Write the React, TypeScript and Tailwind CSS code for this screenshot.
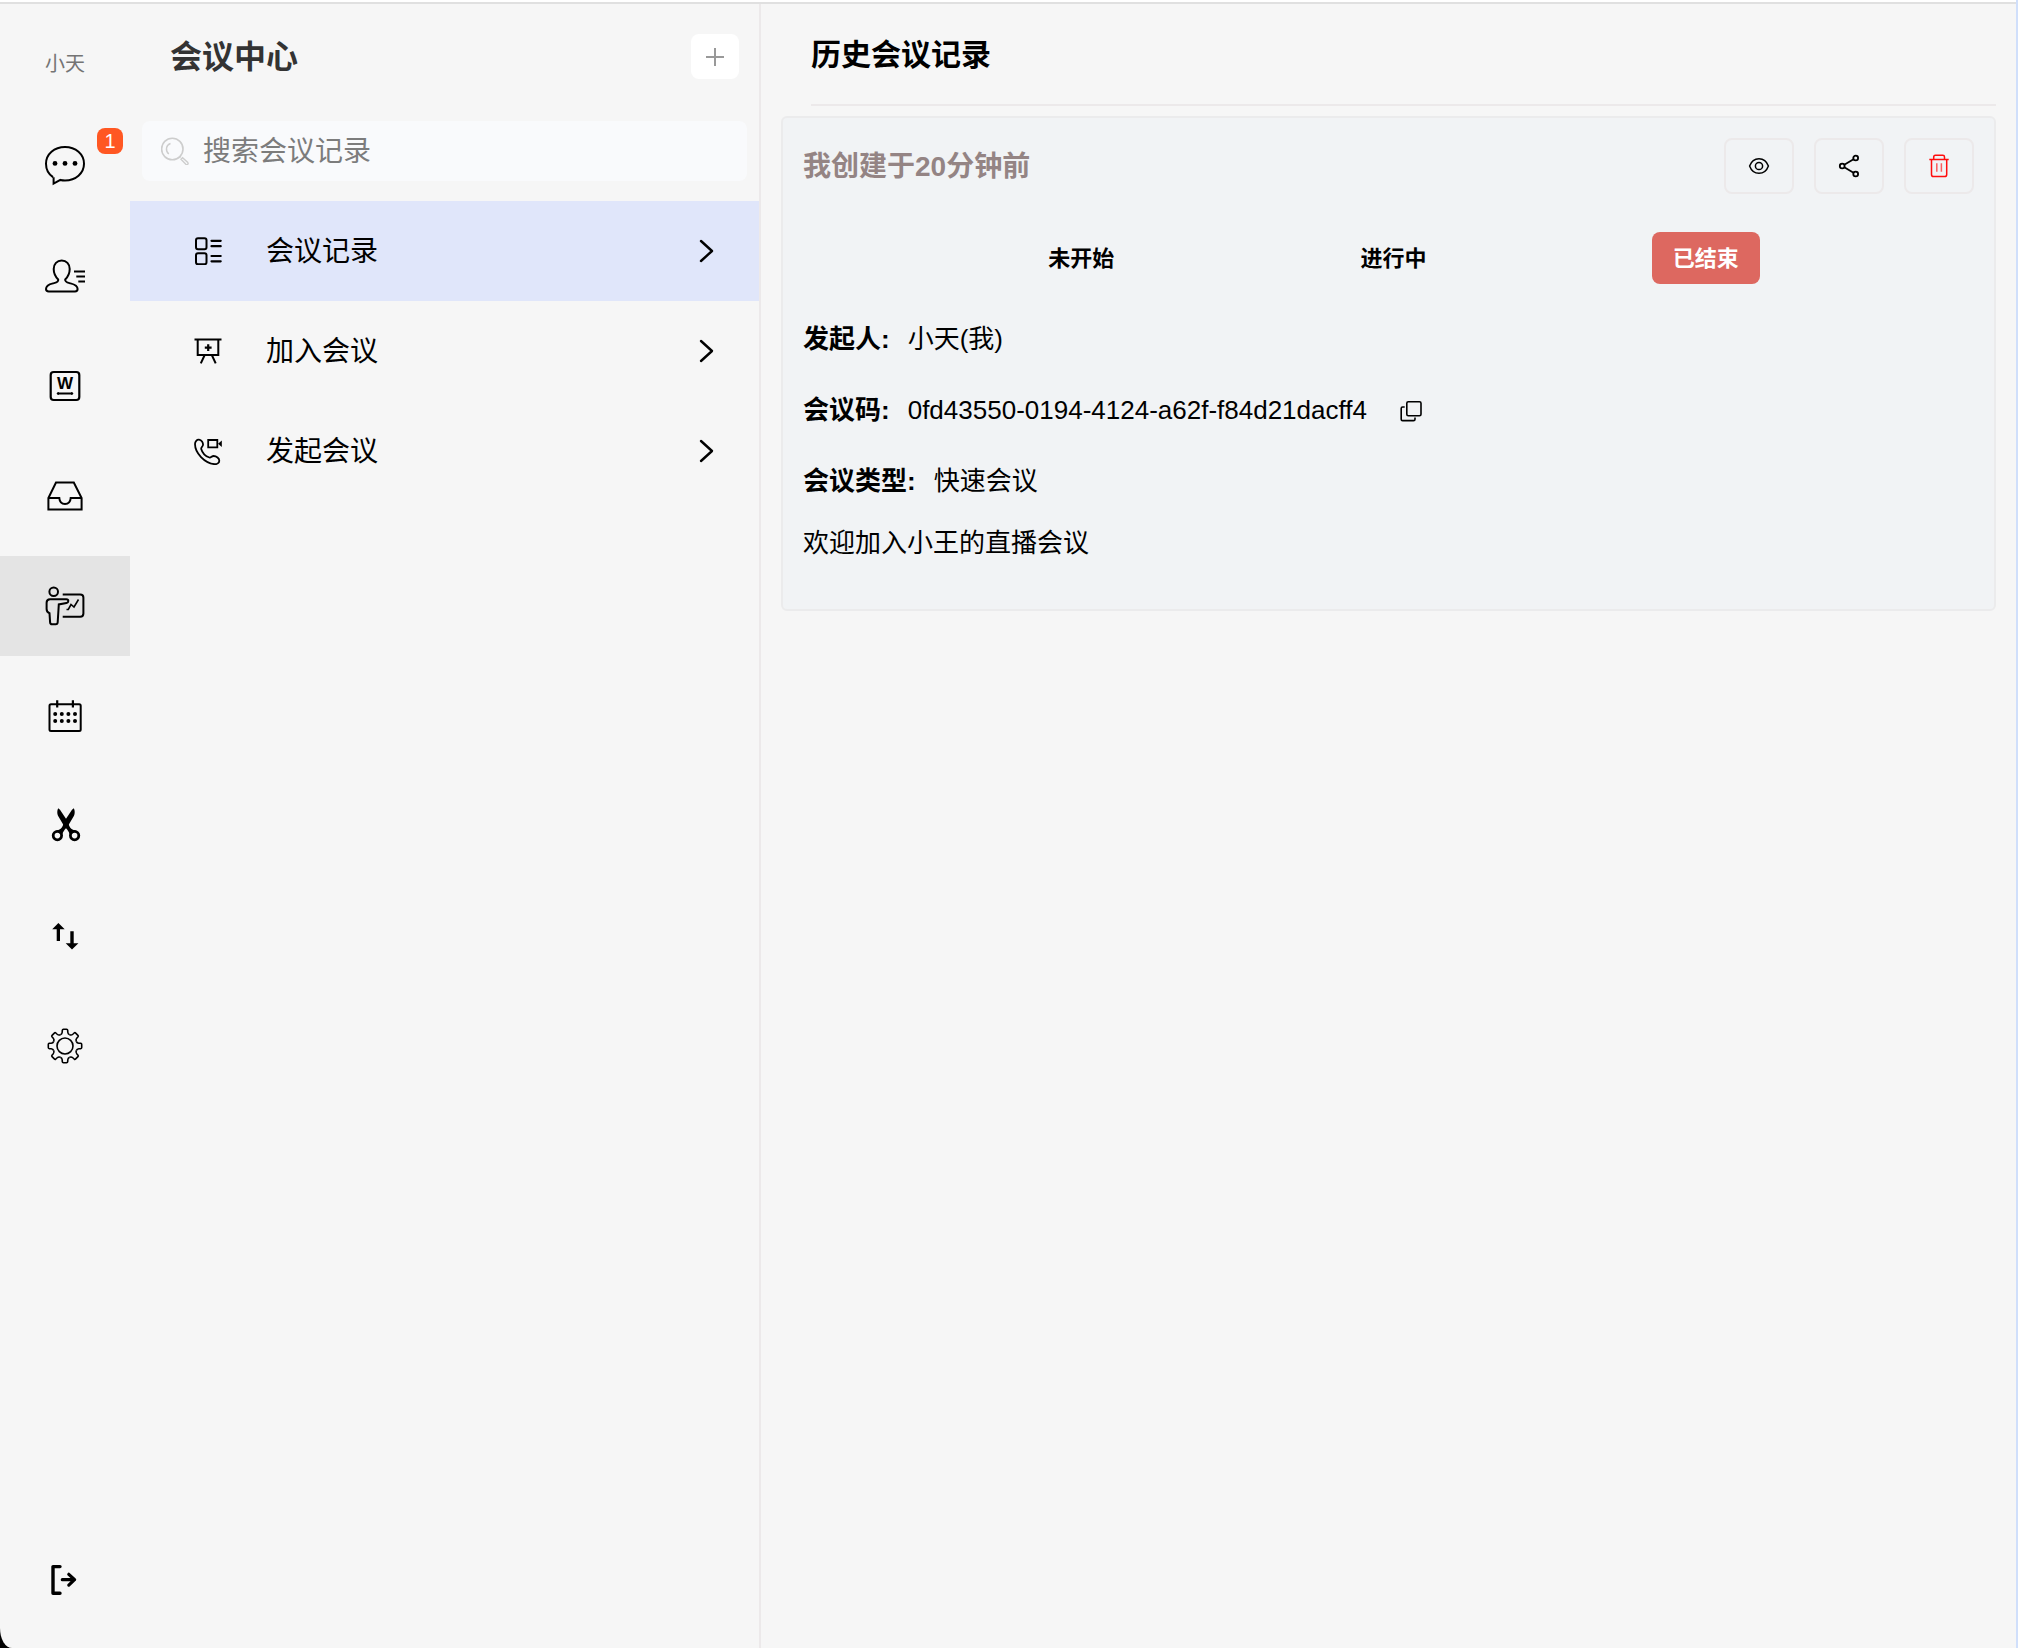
import { useState } from "react";
import type { ReactNode } from "react";
import clsx from "clsx";

type IconProps = { children: ReactNode; className?: string; box?: number };

function Icon({ children, className = "size-10", box = 40 }: IconProps) {
  return (
    <svg
      className={clsx("shrink-0", className)}
      viewBox={`0 0 ${box} ${box}`}
      fill="none"
      stroke="currentColor"
      strokeWidth={2}
      aria-hidden="true"
    >
      {children}
    </svg>
  );
}

const ChatIcon = () => (
  <Icon>
    <path d="M8 31.2C3.6 28.2 1 23.3 1 17.8C1 8.3 9.3 1 20 1S39 8.300 39 17.8S30.700 34.4 20 34.4C18.3 34.4 16.8 34.2 15.4 33.9L8.6 37.600V31.2" />
    <g fill="currentColor" stroke="none">
      <circle cx="10" cy="17.4" r="2.4" />
      <circle cx="20" cy="17.4" r="2.4" />
      <circle cx="30" cy="17.4" r="2.4" />
    </g>
  </Icon>
);

const ContactIcon = () => (
  <Icon>
    <path d="M13.2 23.5C10.5 20.8 8.700 17 8.7 13C8.7 8 12 4.6 16.7 4.6S24.7 8 24.7 13C24.7 17 22.9 20.8 20.2 23.5C19.8 26.3 22.5 26.6 25.5 27.4C30 28.5 32.6 30 32.6 33C32.6 34.700 31.6 35.4 30 35.4H3.8C2 35.4 1 34.7 1 33C1 30 3.5 28.5 8 27.4C11 26.6 13.7 26.3 13.2 23.5Z" />
    <path d="M29 15.4H40M31.3 20.4H40M33.3 25.4H40" />
  </Icon>
);

const WordIcon = () => (
  <Icon>
    <rect x="5.7" y="6" width="28.6" height="28" rx="3" strokeWidth="2.2" />
    <text
      x="20"
      y="23"
      textAnchor="middle"
      className="font-['Liberation_Sans',sans-serif] text-[17px] font-bold"
      fill="currentColor"
      stroke="none"
    >
      W
    </text>
    <path d="M12 27.5H28" strokeWidth="2" />
    <path d="M11.3 27.5L14 26V29ZM28.7 27.5L26 26V29Z" fill="currentColor" stroke="none" />
  </Icon>
);

const InboxIcon = () => (
  <Icon>
    <path d="M11 6.5H28.8L36.6 22V33.5H3.4V22Z" />
    <path d="M3.4 22H14.3C14.6 25.8 16.9 28 20 28S25.4 25.8 25.7 22H36.6" />
  </Icon>
);

const MeetingIcon = () => (
  <Icon>
    <circle cx="8.7" cy="5.8" r="4.3" />
    <path d="M5 13.3H21.3C22.7 13.3 23.3 14 23.3 15C23.3 16.2 22.6 16.8 21.5 17L13.8 18.4L12.7 36.3C12.6 37.6 12 38.2 10.8 38.2H7C5.8 38.2 5.2 37.6 5.1 36.3L4.5 27.3C2.500 26.5 1.6 25 1.6 23V16.8C1.6 14.6 2.8 13.3 5 13.3Z" />
    <path d="M17.7 8.4H35.2C37.3 8.4 38.4 9.5 38.4 11.6V27.5C38.4 29.6 37.3 30.7 35.2 30.7H17.7" />
    <path d="M21.5 23.5H23.3L26 18.5L29 21L33.5 13.5" strokeWidth="1.6" />
  </Icon>
);

const CalendarIcon = () => (
  <Icon>
    <rect x="4.5" y="8.2" width="31.2" height="26.8" rx="1.5" />
    <path d="M12.2 4.2V11.4M27.9 4.2V11.4" strokeWidth="2.2" />
    <g fill="currentColor" stroke="none">
      {[10.2, 16.8, 23.4, 30].map((x) => (
        <g key={x}>
          <circle cx={x} cy="18" r="2" />
          <circle cx={x} cy="25" r="2" />
        </g>
      ))}
    </g>
  </Icon>
);

const ScissorsIcon = () => (
  <Icon>
    <circle cx="12.4" cy="29.6" r="4.2" strokeWidth="2.8" />
    <circle cx="29.6" cy="29.6" r="4.2" strokeWidth="2.8" />
    <g fill="currentColor" stroke="none">
      <path d="M13.2 2.2L15 3.8L23.3 16.2C24 20.5 25.5 23.5 31 24.8L25 29C24 25 21 22.500 18.900 19.8L13 9.8C12 7.2 12 4.5 13.2 2.2Z" />
      <path d="M28.8 2.2L27 3.8L18.7 16.2C18 20.5 16.5 23.5 11 24.8L17 29C18 25 21 22.500 23.100 19.8L29 9.8C30 7.2 30 4.5 28.8 2.2Z" />
    </g>
  </Icon>
);

const TransferIcon = () => (
  <Icon>
    <g fill="currentColor" stroke="none">
      <path d="M13.4 7L19.7 13.3H15V25H11.7V13.3H7.2Z" />
      <path d="M27 33.4L20.7 27.3H25.3V15.3H28.7V27.3H33.4Z" />
    </g>
  </Icon>
);

const GearIcon = () => (
  <Icon>
    <circle cx="20" cy="20" r="8" strokeWidth="1.6" />
    {[0, 45, 90, 135, 180, 225, 270, 315].map((deg) => (
      <path
        key={deg}
        strokeWidth="1.6"
        transform={`translate(20 20) rotate(${deg})`}
        d="M-4.67 -11.27C-3.4 -11.8 -2.9 -12.6 -2.8 -13.8L-2.7 -15.7Q-2.6 -16.7 -1.6 -16.7H1.6Q2.6 -16.7 2.7 -15.7L2.8 -13.8C2.9 -12.6 3.4 -11.8 4.67 -11.27"
      />
    ))}
  </Icon>
);

const LogoutIcon = () => (
  <Icon>
    <g strokeLinecap="round" strokeLinejoin="round">
      <path d="M15 6.6H8V33.3H15" strokeWidth="3.4" />
      <path d="M17.3 19.7H29.5M23.8 14.3L29.6 19.7L23.8 25.1" strokeWidth="3.2" />
    </g>
  </Icon>
);

const SearchIcon = () => (
  <Icon box={28} className="size-7 text-[#cdcdcd]">
    <circle cx="11.3" cy="12" r="10.7" strokeWidth="1.6" />
    <path d="M9.5 6.5C5 8 4 13.5 7.8 17" strokeWidth="1.4" />
    <path d="M18.2 20.8L19.8 19.2M20 22.3L21.6 20.7L26.8 25.5C27.7 27 26.3 28.3 24.8 27.3Z" strokeWidth="1.4" />
  </Icon>
);

const RecordsIcon = () => (
  <Icon box={28} className="size-7">
    <rect x="2" y="1.2" width="10.5" height="11" rx="2" />
    <rect x="2" y="16.3" width="10.5" height="11" rx="2" />
    <path d="M17.5 3.8H26.7M17.5 9.2H26.7M17.5 19H26.7M17.5 24.3H26.7" strokeWidth="2.2" strokeLinecap="round" />
  </Icon>
);

const JoinIcon = () => (
  <Icon box={28} className="size-7">
    <path d="M.5 2.6H27.5M3.7 2.6V18H24.3V2.6M10.7 18L6.8 26.4M17.8 18L21.7 26.4" />
    <path d="M14.2 7.3V14.1M10.8 10.7H17.6" strokeWidth="2.2" />
  </Icon>
);

const CallIcon = () => (
  <Icon box={28} className="size-7">
    <path d="M1 7C1 4.3 2.9 2.5 5 2.7C7.5 3 9.3 5.5 9 8C8.8 9.6 7 10.3 7.2 12C8.2 15.5 11.5 19.2 15.4 20.5C17 20.9 17.8 19 19.6 19C22.5 19 25.3 21.3 25.3 23.7C25.3 26 23 27.4 20.6 27.2C10.5 26 1 16 1 7Z" strokeWidth="1.8" />
    <path d="M14.2 3H23.3V10.4H14.2Z" strokeWidth="1.8" />
    <path d="M24 6.7L27.8 3.5V10Z" fill="currentColor" stroke="none" />
  </Icon>
);

const ChevronIcon = () => (
  <Icon box={24} className="size-6">
    <path d="M6 2L17 12L6 22" strokeWidth="2.4" strokeLinecap="round" strokeLinejoin="round" />
  </Icon>
);

const EyeIcon = () => (
  <Icon box={24} className="size-6">
    <path d="M2.6 12C4.3 7.3 7.7 4.7 12 4.7S19.7 7.3 21.4 12C19.7 16.7 16.3 19.3 12 19.3S4.3 16.7 2.6 12Z" strokeWidth="1.5" />
    <circle cx="12" cy="12" r="3.6" strokeWidth="1.5" />
  </Icon>
);

const ShareIcon = () => (
  <Icon box={24} className="size-6">
    <g strokeWidth="1.8">
      <circle cx="5.2" cy="12" r="2.4" />
      <circle cx="18.7" cy="4" r="2.4" />
      <circle cx="18.7" cy="20" r="2.4" />
      <path d="M7.3 10.7L16.5 5.3M7.3 13.3L16.5 18.7" />
    </g>
  </Icon>
);

const TrashIcon = () => (
  <Icon box={24} className="size-6 text-[#ff0d0d]">
    <path d="M2.3 5.5H21.7M4.5 5.5V20.5C4.5 22 5.2 22.6 6.6 22.6H17.6C19 22.6 19.7 22 19.7 20.5V5.5M6.7 5.5V3C6.7 1.8 7.2 1.3 8.4 1.3H15.8C17 1.3 17.5 1.8 17.5 3V5.5" strokeWidth="1.5" />
    <path d="M9.8 9.3V17.7M14.4 9.3V17.7" strokeWidth="1.5" opacity=".65" />
  </Icon>
);

const CopyIcon = () => (
  <Icon box={24} className="size-6">
    <rect x="7.8" y="2.7" width="14.2" height="14" rx="1.5" strokeWidth="1.6" />
    <path d="M5.7 8H3.6C2.6 8 2.2 8.5 2.2 9.4V20.2C2.2 21.2 2.7 21.6 3.6 21.6H14.5C15.5 21.6 16 21.2 16 20.2V18.6" strokeWidth="1.6" />
  </Icon>
);

const NAV_ITEMS = [
  { id: "chat", label: "聊天", icon: <ChatIcon />, badge: 1 },
  { id: "contacts", label: "通讯录", icon: <ContactIcon /> },
  { id: "docs", label: "文档", icon: <WordIcon /> },
  { id: "inbox", label: "收件箱", icon: <InboxIcon /> },
  { id: "meeting", label: "会议", icon: <MeetingIcon /> },
  { id: "calendar", label: "日历", icon: <CalendarIcon /> },
  { id: "capture", label: "截图", icon: <ScissorsIcon /> },
  { id: "transfer", label: "传输", icon: <TransferIcon /> },
  { id: "settings", label: "设置", icon: <GearIcon /> },
];

const MENU_ITEMS = [
  { id: "records", label: "会议记录", icon: <RecordsIcon /> },
  { id: "join", label: "加入会议", icon: <JoinIcon /> },
  { id: "start", label: "发起会议", icon: <CallIcon /> },
];

const STATUSES = ["未开始", "进行中", "已结束"];

const meeting = {
  createdAt: "我创建于20分钟前",
  status: "已结束",
  owner: "小天(我)",
  code: "0fd43550-0194-4124-a62f-f84d21dacff4",
  type: "快速会议",
  description: "欢迎加入小王的直播会议",
};

function Sidebar() {
  const [active, setActive] = useState("meeting");

  return (
    <aside className="flex w-[130px] shrink-0 flex-col">
      <div className="flex h-28 items-center justify-center pt-2 text-[20px] text-[#747474]">小天</div>
      <nav className="flex flex-col gap-[10px]">
        {NAV_ITEMS.map((item) => (
          <button
            key={item.id}
            type="button"
            aria-label={item.label}
            onClick={() => setActive(item.id)}
            className={clsx("relative flex h-[100px] items-center justify-center", active === item.id && "bg-[#e4e4e4]")}
          >
            {item.icon}
            {item.badge && (
              <span className="absolute top-3 right-[7px] flex size-[26px] items-center justify-center rounded-lg bg-[#ff5722] text-[20px] leading-none text-white">
                {item.badge}
              </span>
            )}
          </button>
        ))}
      </nav>
      <button type="button" aria-label="退出登录" className="mt-auto mb-[18px] flex h-[100px] items-center justify-center">
        <LogoutIcon />
      </button>
    </aside>
  );
}

function MeetingMenu() {
  const [selected, setSelected] = useState("records");

  return (
    <section className="flex w-[631px] shrink-0 flex-col border-r-2 border-[#ece9ea]">
      <header className="flex items-center justify-between py-[30px] pr-5 pl-10">
        <h1 className="text-[32px] leading-none font-bold text-[#333]">会议中心</h1>
        <button type="button" aria-label="新建会议" className="flex h-[45px] w-12 items-center justify-center rounded-lg bg-white text-[#999]">
          <Icon box={18} className="size-[18px]">
            <path d="M9 0V18M0 9H18" />
          </Icon>
        </button>
      </header>
      <label className="mx-3 mt-3 flex h-[60px] items-center gap-[14px] rounded-lg bg-[#f9fafc] pr-4 pl-[19px]">
        <SearchIcon />
        <input
          type="text"
          aria-label="搜索会议记录"
          placeholder="搜索会议记录"
          className="min-w-0 flex-1 bg-transparent pt-[2px] text-[28px] leading-[40px] outline-none placeholder:text-[#7c7c7c]"
        />
      </label>
      <nav className="mt-5 flex flex-col">
        {MENU_ITEMS.map((item) => (
          <button
            key={item.id}
            type="button"
            onClick={() => setSelected(item.id)}
            className={clsx("flex h-[100px] items-center pr-10 pl-16 text-[28px]", selected === item.id && "bg-[#e0e6fa]")}
          >
            {item.icon}
            <span className="ml-11 pt-[2px]">{item.label}</span>
            <span className="ml-auto">
              <ChevronIcon />
            </span>
          </button>
        ))}
      </nav>
    </section>
  );
}

function ActionButton({ label, children }: { label: string; children: ReactNode }) {
  return (
    <button type="button" aria-label={label} className="flex h-14 w-[70px] items-center justify-center rounded-lg border-2 border-[#ece9ea]">
      {children}
    </button>
  );
}

function InfoRow({ label, children }: { label: string; children: ReactNode }) {
  return (
    <div className="flex h-[71px] items-center gap-[18px] text-[26px]">
      <dt className="font-bold">{label}:</dt>
      <dd className="flex items-center gap-8">{children}</dd>
    </div>
  );
}

function MeetingCard() {
  return (
    <article className="mt-[10px] rounded-md border-2 border-[#ebebec] bg-[#f1f3f5] px-5 pt-5 pb-10">
      <div className="flex items-center justify-between">
        <h3 className="pt-[2px] text-[28px] font-bold text-[#948484]">{meeting.createdAt}</h3>
        <div className="flex gap-5">
          <ActionButton label="查看">
            <EyeIcon />
          </ActionButton>
          <ActionButton label="分享">
            <ShareIcon />
          </ActionButton>
          <ActionButton label="删除">
            <TrashIcon />
          </ActionButton>
        </div>
      </div>

      <div className="mt-[38px] flex justify-evenly pr-[10px] pl-5 text-[22px] font-bold">
        {STATUSES.map((status) => (
          <span
            key={status}
            className={clsx(
              "flex h-[52px] w-[108px] items-center justify-center rounded-lg",
              status === meeting.status && "bg-[#dd6860] text-white",
            )}
          >
            {status}
          </span>
        ))}
      </div>

      <dl className="mt-5">
        <InfoRow label="发起人">{meeting.owner}</InfoRow>
        <InfoRow label="会议码">
          {meeting.code}
          <button type="button" aria-label="复制会议码" className="flex">
            <CopyIcon />
          </button>
        </InfoRow>
        <InfoRow label="会议类型">{meeting.type}</InfoRow>
      </dl>
      <p className="flex h-[52px] items-center text-[26px]">{meeting.description}</p>
    </article>
  );
}

export default function App() {
  return (
    <div className="flex min-h-screen bg-black font-['Liberation_Sans','Noto_Sans_CJK_SC',sans-serif] text-black">
      <div className="flex flex-1 flex-col rounded-bl-[12px_20px] border-r-2 border-r-[#d0dffb] bg-[#f6f6f6]">
        <div className="h-1 border-b-2 border-[#e0e0e0] bg-white" />
        <div className="flex flex-1">
          <Sidebar />
          <MeetingMenu />
          <main className="min-w-0 flex-1 px-5">
            <header className="ml-[30px] flex h-[102px] items-center border-b-2 border-[#ece9ea]">
              <h2 className="text-[30px] font-bold">历史会议记录</h2>
            </header>
            <MeetingCard />
          </main>
        </div>
      </div>
    </div>
  );
}
